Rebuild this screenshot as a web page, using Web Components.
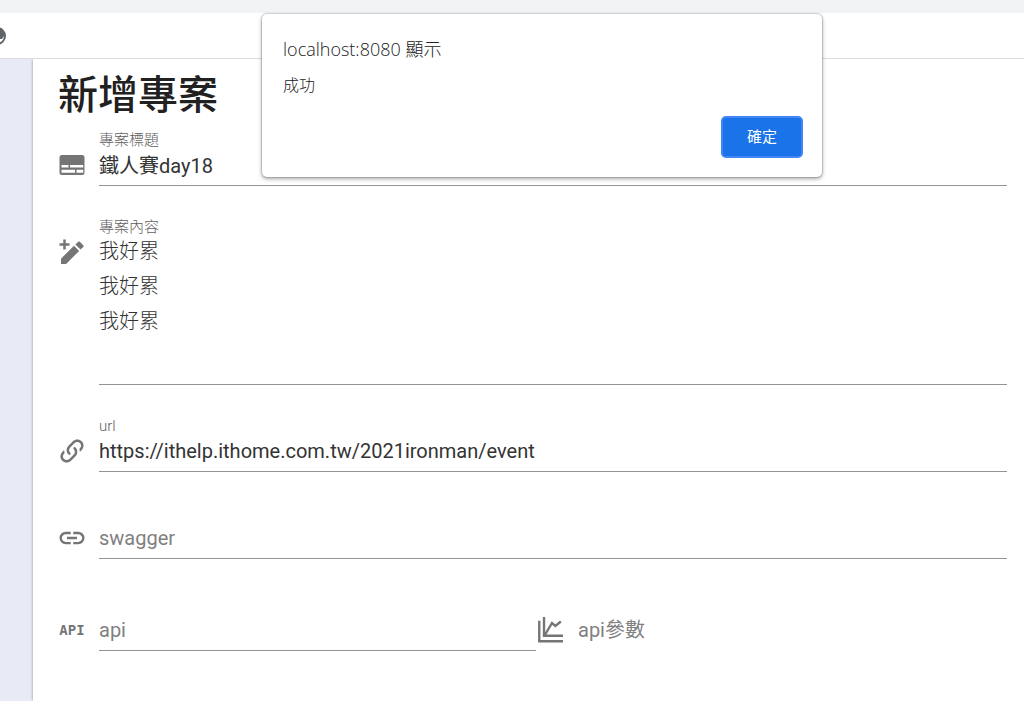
<!DOCTYPE html>
<html lang="zh-Hant">
<head>
  <meta charset="utf-8">
  <meta name="viewport" content="width=device-width, initial-scale=1">
  <title>新增專案</title>
  <style>
    body {
      margin: 0;
      font-family: Roboto, "Noto Sans CJK TC", sans-serif;
      color: #212121;
      background: white;
    }
  </style>
</head>
<body>
  <project-app>
    <project-form>
      <form-field icon="subtitles" label="專案標題" value="鐵人賽day18"></form-field>
      <form-field icon="pencil" label="專案內容" value="我好累&#10;我好累&#10;我好累" multiline></form-field>
      <form-field icon="linkVariant" label="url" value="https://ithelp.ithome.com.tw/2021ironman/event"></form-field>
      <form-field icon="link" label="swagger"></form-field>
      <form-field slot="pair" icon="api" label="api"></form-field>
      <form-field slot="pair" icon="chart" label="api參數" plain></form-field>
    </project-form>
    <alert-dialog slot="dialog" origin="localhost:8080 顯示">成功</alert-dialog>
  </project-app>

  <script>
    const icons = {
      subtitles: '<path fill-rule="evenodd" d="M4 4H20A2 2 0 0 1 22 6V18A2 2 0 0 1 20 20H4A2 2 0 0 1 2 18V6A2 2 0 0 1 4 4M3.6 12H9.2V14H3.6ZM10.4 12H21V14H10.4ZM3.6 15.8H14.4V18.2H3.6ZM15.6 15.8H21V18.2H15.6Z"/>',
      pencil: '<path d="M5 2H7V5H10V7H7V10H5V7H2V5H5ZM3.2 21.6V17.3L13.6 7L17.7 11.1L7.3 21.6ZM14.7 5.9L16.9 3.8Q17.6 3.2 18.3 3.8L21 6.5Q21.7 7.2 21 7.9L18.8 10Z"/>',
      linkVariant: '<path d="M10.59,13.41C11,13.8 11,14.44 10.59,14.83C10.2,15.22 9.56,15.22 9.17,14.83C7.22,12.88 7.22,9.71 9.17,7.76V7.76L12.71,4.22C14.66,2.27 17.83,2.27 19.78,4.22C21.73,6.17 21.73,9.34 19.78,11.29L18.29,12.78C18.3,11.96 18.17,11.14 17.89,10.36L18.36,9.88C19.54,8.71 19.54,6.81 18.36,5.64C17.19,4.46 15.29,4.46 14.12,5.64L10.59,9.17C9.41,10.34 9.41,12.24 10.59,13.41M13.41,9.17C13.8,8.78 14.44,8.78 14.83,9.17C16.78,11.12 16.78,14.29 14.83,16.24V16.24L11.29,19.78C9.34,21.73 6.17,21.73 4.22,19.78C2.27,17.83 2.27,14.66 4.22,12.71L5.71,11.22C5.7,12.04 5.83,12.86 6.11,13.65L5.64,14.12C4.46,15.29 4.46,17.19 5.64,18.36C6.81,19.54 8.71,19.54 9.88,18.36L13.41,14.83C14.59,13.66 14.59,11.76 13.41,10.59C13,10.2 13,9.56 13.41,9.17Z"/>',
      link: '<path d="M3.9,12C3.9,10.29 5.29,8.9 7,8.9H11V7H7A5,5 0 0,0 2,12A5,5 0 0,0 7,17H11V15.1H7C5.29,15.1 3.9,13.71 3.9,12M8,13H16V11H8V13M17,7H13V8.9H17C18.71,8.9 20.1,10.29 20.1,12C20.1,13.71 18.71,15.1 17,15.1H13V17H17A5,5 0 0,0 22,12A5,5 0 0,0 17,7Z"/>',
      chart: '<g fill="none" stroke="currentColor" stroke-width="1.9"><path d="M2.6 4.5V21H21.6"/><path d="M6.4 1.6V16.6H21.6"/><path d="M7 16.2L12.8 6.4L15.5 8.8L19.9 5.2"/></g>'
    };

    class MdiIcon extends HTMLElement {
      constructor() {
        super();
        this.attachShadow({ mode: 'open' });
      }

      connectedCallback() {
        const name = this.getAttribute('name');
        const content = name == 'api'
          ? '<span>API</span>'
          : `<svg viewBox="0 0 24 24" aria-hidden="true">${icons[name]}</svg>`;
        this.shadowRoot.innerHTML = `
          <style>
            :host {
              display: flex;
              align-items: center;
              justify-content: center;
              width: 30px;
              height: 30px;
              color: #757575;
            }

            svg {
              width: 100%;
              height: 100%;
              fill: currentColor;
            }

            span {
              font: bold 14px "DejaVu Sans Mono", monospace;
            }
          </style>
          ${content}
        `;
      }
    }

    class FormField extends HTMLElement {
      constructor() {
        super();
        this.attachShadow({ mode: 'open' });
      }

      connectedCallback() {
        const label = this.getAttribute('label');
        const value = this.getAttribute('value') || '';
        const control = this.hasAttribute('multiline')
          ? '<textarea id="control" spellcheck="false"></textarea>'
          : '<input id="control" type="text" spellcheck="false">';
        this.shadowRoot.innerHTML = `
          <style>
            :host {
              display: grid;
              grid-template-columns: 30px 1fr;
              grid-template-rows: 14px auto;
              column-gap: 12px;
            }

            mdi-icon {
              grid-area: 2 / 1;
              margin-top: 3px;
            }

            label {
              grid-area: 1 / 2;
              font-size: 15px;
              font-weight: 300;
              line-height: 14px;
              color: #616161;
            }

            /* an empty field shows its label on the input line */
            label.resting {
              grid-area: 2 / 2;
              font-size: 20px;
              font-weight: 400;
              line-height: 36px;
              color: #808080;
              z-index: 1;
              pointer-events: none;
            }

            input, textarea {
              grid-area: 2 / 2;
              box-sizing: border-box;
              width: 100%;
              min-width: 0;
              height: 39px;
              margin: 0;
              padding: 0 0 3px;
              border: 0;
              border-bottom: 1px solid #949494;
              border-radius: 0;
              outline: 0;
              background: transparent;
              font: inherit;
              font-size: 20px;
              color: #333;
            }

            textarea {
              display: block;
              height: 151px;
              font-weight: 300;
              line-height: 35px;
              resize: none;
            }

            :host([plain]) input {
              border-bottom-color: transparent;
            }
          </style>
          <mdi-icon name="${this.getAttribute('icon')}"></mdi-icon>
          <label for="control" class="${value ? '' : 'resting'}">${label}</label>
          ${control}
        `;
        this.shadowRoot.querySelector('#control').value = value;
      }
    }

    class ProjectForm extends HTMLElement {
      constructor() {
        super();
        this.attachShadow({ mode: 'open' });
        this.shadowRoot.innerHTML = `
          <style>
            :host {
              display: block;
              padding: 10px 17px 40px 24px;
            }

            h1 {
              margin: 0 0 10px;
              padding-left: 1px;
              font-size: 40px;
              font-weight: 500;
              line-height: 54px;
            }

            form {
              display: flex;
              flex-direction: column;
              gap: 34px;
            }

            #main {
              display: contents;
            }

            #pair {
              display: grid;
              grid-template-columns: 1fr 1fr;
              margin: 5px -8px 0 0;
            }
          </style>
          <h1>新增專案</h1>
          <form>
            <slot id="main"></slot>
            <div id="pair">
              <slot name="pair"></slot>
            </div>
          </form>
        `;
      }
    }

    class AlertDialog extends HTMLElement {
      constructor() {
        super();
        this.attachShadow({ mode: 'open' });
      }

      connectedCallback() {
        this.shadowRoot.innerHTML = `
          <style>
            :host {
              position: absolute;
              top: 14px;
              left: 262px;
              z-index: 10;
              box-sizing: border-box;
              width: 560px;
              padding: 23px 19px 19px 21px;
              border-radius: 5px;
              background: white;
              box-shadow: 0 0 1px 1px rgba(60, 64, 67, 0.2), 0 2px 4px rgba(60, 64, 67, 0.45);
              font-family: "Open Sans", "Noto Sans CJK TC", sans-serif;
              font-weight: 300;
            }

            h2 {
              margin: 0;
              font-size: 18px;
              font-weight: inherit;
              line-height: 24px;
            }

            p {
              margin: 12px 0 19px;
              font-size: 16px;
              line-height: 24px;
            }

            #actions {
              display: flex;
              justify-content: flex-end;
            }

            button {
              width: 82px;
              height: 42px;
              padding: 0 0 3px;
              border: 2px solid #4285f4;
              border-radius: 5px;
              background: #1a73e8;
              color: white;
              font: inherit;
              font-size: 15px;
              font-weight: 400;
            }
          </style>
          <div role="alertdialog" aria-labelledby="origin">
            <h2 id="origin">${this.getAttribute('origin')}</h2>
            <p><slot></slot></p>
            <div id="actions">
              <button type="button">確定</button>
            </div>
          </div>
        `;
      }
    }

    class ProjectApp extends HTMLElement {
      constructor() {
        super();
        this.attachShadow({ mode: 'open' });
        this.shadowRoot.innerHTML = `
          <style>
            :host {
              display: flex;
              flex-direction: column;
              height: 100vh;
              overflow: hidden;
            }

            #tabs {
              flex: none;
              height: 13px;
              background: #f1f3f4;
            }

            #bookmarks {
              flex: none;
              display: flex;
              align-items: center;
              height: 45px;
              border-bottom: 1px solid #dadce0;
            }

            #bookmarks svg {
              width: 6px;
              height: 18px;
            }

            #body {
              flex: 1;
              min-height: 0;
              display: flex;
              overflow: hidden;
            }

            aside {
              flex: none;
              width: 33px;
              background: #e8eaf6;
            }

            main {
              flex: 1;
              min-width: 0;
              background: white;
              box-shadow: 0 0 3px rgba(0, 0, 0, 0.35);
              overflow: hidden;
            }
          </style>
          <div id="tabs"></div>
          <div id="bookmarks">
            <svg viewBox="0 0 6 18" aria-hidden="true">
              <circle cx="-3" cy="9" r="8" fill="white" stroke="#5f6368" stroke-width="2"/>
              <path d="M-3 1A8 8 0 0 1 5 9H4L2 12H0V9H-3Z" fill="#5f6368"/>
            </svg>
          </div>
          <div id="body">
            <aside></aside>
            <main><slot></slot></main>
          </div>
          <slot name="dialog"></slot>
        `;
      }
    }

    customElements.define('mdi-icon', MdiIcon);
    customElements.define('form-field', FormField);
    customElements.define('project-form', ProjectForm);
    customElements.define('alert-dialog', AlertDialog);
    customElements.define('project-app', ProjectApp);
  </script>
</body>
</html>
